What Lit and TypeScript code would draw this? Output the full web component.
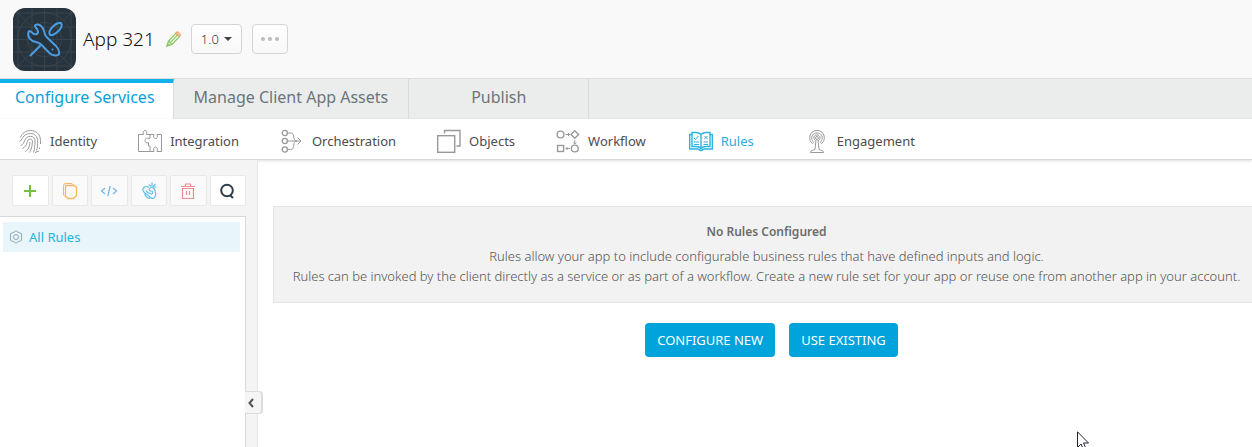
import { LitElement, html, css, svg, TemplateResult } from "lit";
import { customElement, state } from "lit/decorators.js";
import { classMap } from "lit/directives/class-map.js";

const identityIcon = html`<svg class="icon" viewBox="0 0 24 24" aria-hidden="true">
  <path d="M2.5 8.5C4 4 8 1.5 12.500 1.500C18 1.500 22.500 5.500 22.500 11.500V15" />
  <path d="M1.500 12.500C4.500 12 4 4.500 12.500 4.500C17 4.500 19.700 8 19.700 12C19.700 16 19.500 19 18.500 21.500" />
  <path d="M2.500 16.500C8 14.500 5.500 7.300 12.500 7.300C15.500 7.300 17 9.500 17 12C17 17 16.500 20 15.500 23.500" />
  <path d="M4.500 19.500C10.500 16.500 8 10 12.300 10C14 10 14.500 11.500 14.400 13C14 18 13.500 20.500 11.500 23.500" />
  <path d="M7.500 22.500C11 19.500 11.500 17 12 13" />
  <path d="M21.500 18.500V20M17 23.500L21 22" />
</svg>`;

const integrationIcon = html`<svg class="icon" viewBox="0 0 24 24" aria-hidden="true">
  <path d="M.5 5.500H5.500C4.500 2.500 5.500 1.500 7 1.500C8.500 1.500 9.500 2.500 8.500 5.500H12V9.500C8.500 8.500 7 9.500 7 11.500C7 13.500 8.500 14.500 10.500 13.500V17H12V22.500H.5Z" />
  <path d="M12 5.500H16C15 8.500 16 9.500 17.500 9.500C19 9.500 20 8.500 19 5.500H23.500V22.500H19C20 19.500 19 18 17.500 18C16 18 15 19.500 16 22.500H12" />
</svg>`;

const orchestrationIcon = html`<svg class="icon" viewBox="0 0 24 24" aria-hidden="true">
  <g stroke-width="1.300"><circle cx="4.800" cy="4" r="2.600" /><circle cx="4.800" cy="12" r="2.600" /><circle cx="4.800" cy="20.500" r="2.600" /></g>
  <path d="M7.500 4H10.500C16 4 11.500 12 17 12M7.500 20.500H10.500C16 20.500 11.500 12 17 12M7.500 12H21M17.500 8.500L21 12L17.500 15.500" />
</svg>`;

const objectsIcon = html`<svg class="icon bold" viewBox="0 0 24 24" aria-hidden="true">
  <rect x=".7" y="6.700" width="17" height="16.600" /><path d="M7.500 4.500V1.500H23V17H19.500" />
</svg>`;

const workflowIcon = html`<svg class="icon bold" viewBox="0 0 24 24" aria-hidden="true">
  <circle cx="4.500" cy="5.500" r="3.400" /><path d="M18.800 1.700L22.600 5.500L18.800 9.300L15 5.500Z" />
  <circle cx="18.800" cy="19.500" r="3.400" /><rect x="1.600" y="16.500" width="6" height="6" />
  <path class="thin" d="M9.500 5.500H13.500M12 4L13.500 5.500L12 7M18.800 11V15M17.300 13.500L18.800 15L20.300 13.500M14 19.500H10M11.500 18L10 19.500L11.500 21" />
</svg>`;

const rulesIcon = html`<svg class="icon bold" viewBox="0 0 24 24" aria-hidden="true">
  <path d="M12 5.500C10.500 4 8.500 3.500 7 3.500H3V17.500H7C9 17.500 11 18 12 19.500C13 18 15 17.500 17 17.500H21V3.500H17C15.500 3.500 13.500 4 12 5.500V19" />
  <path d="M3 5.500H.7V20H9C10 20 10.500 21.500 12 21.500C13.500 21.500 14 20 15 20H23.300V5.500H21" />
  <path class="thin" d="M5 9L6.500 10.500L9.500 7M15.500 7L18.500 10M18.500 7L15.500 10M5 13H10M5 15.500H10M14.500 13H19M14.500 15.500H19" />
</svg>`;

const engagementIcon = html`<svg class="icon" viewBox="0 0 24 24" aria-hidden="true">
  <path d="M7.500 14.500C3 12 3.500 1.500 12 1.500C20.500 1.500 21 12 16.500 14.500C14.500 13.500 16 12.500 17 10.500C18 7 16 4 12 4C8 4 6 7 7 10.500C8 12.500 9.500 13.500 7.500 14.500Z" />
  <path d="M10.500 11.500C7.500 9.500 9 6 12 6C15 6 16.500 9.500 13.500 11.500" />
  <circle cx="12" cy="9" r="1.500" />
  <path d="M11 11L10 20.500C8 21.500 5.500 21 5.500 23.500H18.500C18.500 21 16 21.500 14 20.500L13 11" />
</svg>`;

interface Service { label: string; icon: TemplateResult; }
const SERVICES: Service[] = [
  { label: "Identity", icon: identityIcon },
  { label: "Integration", icon: integrationIcon },
  { label: "Orchestration", icon: orchestrationIcon },
  { label: "Objects", icon: objectsIcon },
  { label: "Workflow", icon: workflowIcon },
  { label: "Rules", icon: rulesIcon },
  { label: "Engagement", icon: engagementIcon },
];

interface Tool { label: string; tone: string; disabled: boolean; icon: unknown; }
const TOOLS: Tool[] = [
  { label: "Add", tone: "green", disabled: false, icon: svg`<path d="M9 3V15M3 9H15" stroke-width="2"/>` },
  { label: "Copy", tone: "orange", disabled: true, icon: svg`<path d="M4.500 3.500H13L15.500 5.500V13.500L12.500 16.500H7L4.500 14Z" stroke-width="1.300"/><path d="M4 14.500L2.500 13V3.500Q2.500 1.500 4.500 1.500H11L12.500 3"/>` },
  { label: "Edit code", tone: "blue", disabled: true, icon: svg`<path d="M5 6L1.500 9L5 12M13 6L16.500 9L13 12M10.200 4L7.800 14" stroke-width="1.300"/>` },
  { label: "Link", tone: "cyan", disabled: true, icon: svg`<path d="M9 5.500C6 3 2 6 3 8.500C4 11.500 8 12.500 10.500 15.500C13 18 16.500 15 15.500 11C15 8 14.500 5 11.500 5.500C8.500 6 8.500 9 11 9C13.500 9 13 12.500 11 12C9.500 11.500 6.500 10 6 8.500M5 11C4.500 13.500 7 16 10 16.500M9 2.500L11 4.500M12 .5V4.500M15.500 2L13 4.500M14 5H16.500" stroke-width="1.200"/>` },
  { label: "Delete", tone: "red", disabled: true, icon: svg`<path d="M2 4.500H16M6.500 4.500V2H11.500V4.500M3.500 6.500V16.500H14.500V6.500Z M7.500 9V13M10.500 9V13" stroke-width="1.200"/>` },
  { label: "Search", tone: "dark", disabled: false, icon: svg`<circle cx="8" cy="8.500" r="5.800" stroke-width="2"/><path d="M11 13L14 16" stroke-width="2"/>` },
];

@customElement("app-root")
export class AppRoot extends LitElement {
  @state() private service = "Rules";

  static styles = css`
    :host {
      position: relative;
      display: flex;
      flex-direction: column;
      min-height: 100vh;
      overflow: hidden;
      background: #fff;
      color: #555;
      font: 300 13px/20px "Noto Sans", "Open Sans", sans-serif;
    }
    * { box-sizing: border-box; }
    button { font: inherit; color: inherit; padding: 0; margin: 0; cursor: pointer; }
    a { color: inherit; text-decoration: none; }
    svg { display: block; flex: none; fill: none; stroke: currentColor; }

    .header {
      display: flex;
      align-items: center;
      height: 79px;
      padding: 0 13px;
      background: #f9f9f9;
      border-bottom: 1px solid #dcdcdc;
    }
    .title { margin: 0 11px 0 7px; font-size: 19px; line-height: 26px; font-weight: 300; color: #111; }
    .plain { border: 0; background: none; }
    .chip {
      display: flex;
      align-items: center;
      justify-content: center;
      height: 30px;
      padding: 0 9px;
      border: 1px solid #d4d4d4;
      border-radius: 4px;
      background: linear-gradient(#fff, #f8f8f8);
      color: #333;
    }
    .version { gap: 5px; margin: 0 10px; }
    .caret { border: 4px solid transparent; border-top-color: #444; border-bottom: 0; }
    .dots { gap: 3px; padding: 0 8px; }
    .dot { width: 4px; height: 4px; border-radius: 50%; background: #bbb; }

    .tabs {
      display: flex;
      height: 40px;
      background: #ebeded;
      font-size: 16px;
      font-weight: 400;
      color: #6b757b;
    }
    .tab {
      display: flex;
      justify-content: center;
      padding: 7px 20px 0;
      border-right: 1px solid #dadcdc;
      line-height: 22px;
    }
    .tab:last-child { min-width: 180px; }
    .tab.current {
      padding: 3px 18px 0 15px;
      border-top: 4px solid #10b0ec;
      background: #fff;
      color: #0a9fd8;
    }

    .services {
      position: relative;
      display: flex;
      gap: 41px;
      height: 41px;
      padding: 0 18px;
      background: #fff;
      border-bottom: 1px solid #d8d8d8;
      box-shadow: 0 1px 3px #0002;
      font-weight: 400;
      color: #4c4c4c;
    }
    .service { display: flex; align-items: center; gap: 8px; padding-top: 3px; }
    .service.current { padding: 3px 10px 0 2px; color: #2caae1; }
    .icon { width: 24px; height: 24px; color: #999; stroke-width: 1; }
    .icon.bold { stroke-width: 1.4; }
    .thin { stroke-width: 1; }
    .current .icon { color: #2cb3e0; }

    .body { flex: 1; display: grid; grid-template-columns: 258px 1fr; }
    .sidebar {
      position: relative;
      display: flex;
      flex-direction: column;
      padding: 15px 11px 0 0;
      background: #f4f4f4;
      border-right: 1px solid #e6e6e6;
    }
    .tools {
      display: grid;
      grid-template-columns: repeat(6, 1fr);
      gap: 3px;
      padding-left: 12px;
      margin-bottom: 10px;
    }
    .tool {
      display: flex;
      align-items: center;
      justify-content: center;
      height: 31px;
      border: 1px solid #e9e9e9;
      border-radius: 2px;
      background: #fff;
    }
    .tool:disabled { background: #fafafa; }
    .tool svg { width: 18px; height: 18px; }
    .green { color: #76bf43; }
    .orange { color: #f6b75f; }
    .blue { color: #79b7ea; }
    .cyan { color: #66c2e6; }
    .red { color: #ee8d92; }
    .dark { color: #2f3d48; }

    .list {
      flex: 1;
      margin: 0;
      padding: 5px 5px 0 3px;
      list-style: none;
      background: #fff;
      border: 1px solid #d9d9d9;
      border-width: 1px 1px 0 0;
    }
    .entry {
      display: flex;
      align-items: center;
      gap: 6px;
      height: 30px;
      padding-left: 6px;
      background: #e8f5fb;
      color: #1fb4dc;
      font-weight: 400;
    }
    .entry svg { color: #93aab2; }
    .toggle {
      position: absolute;
      right: -6px;
      bottom: 33px;
      display: flex;
      align-items: center;
      justify-content: center;
      width: 18px;
      height: 23px;
      padding-right: 4px;
      border: 1px solid #dcdcdc;
      border-left: 0;
      border-right-width: 2px;
      border-radius: 0 4px 4px 0;
      background: #f5f5f5;
      color: #555;
    }

    .main { min-width: 0; overflow: hidden; padding: 46px 0 0 15px; }
    .content { margin-right: -8px; }
    .panel {
      padding: 15px 16px;
      border: 1px solid #e4e4e4;
      background: #f2f2f2;
      text-align: center;
    }
    .panel h2 { margin: 0 0 4px; padding-bottom: 0; font-size: 12px; line-height: 20px; font-weight: 600; color: #6c6c6c; }
    .panel p { margin: 0; }
    .panel p:last-child { padding-bottom: 1px; }
    .actions { display: flex; justify-content: center; gap: 14px; padding: 20px 0 0 10px; }
    .action {
      height: 34px;
      padding: 0 12px;
      border: 0;
      border-radius: 4px;
      background: #00a3dc;
      color: #fff;
      font-weight: 400;
    }
    .pointer { position: absolute; top: 431px; left: 1077px; }
  `;

  render() {
    return html`
      <header class="header">
        <svg width="63" height="63" viewBox="0 0 63 63" aria-hidden="true">
          <rect width="63" height="63" rx="12" fill="#27343e" stroke="none" />
          <g stroke="#3d4a53" stroke-width=".7">
            <path d="M5 3V60M19 0V63M31.500 0V63M44 0V63M58 3V60M3 5H60M0 19H63M0 31.500H63M0 44H63M3 58H60M4 4L59 59M59 4L4 59" />
            <circle cx="31.500" cy="31.500" r="27" /><circle cx="31.500" cy="31.500" r="17" /><circle cx="31.500" cy="31.500" r="9" />
          </g>
          <g stroke="#4b9ce0" stroke-width="2" stroke-linecap="round" stroke-linejoin="round">
            <path d="M15.500 24C14 29 18 33.500 23 34C27 34.500 30 38 32.500 41L37 45.500C40 48 45 48 46 46C47 43 45 40.500 43 38L34 29.500C30.500 26.500 32 22 29 19C27 16.500 23 15.500 22 17.500C21.500 19.500 25 20.500 25 23.500C25 27 21.500 27 19.500 25C18 23 16 22.500 15.500 24Z" fill="#27343e" />
            <ellipse cx="42.500" cy="21" rx="8" ry="3.600" transform="rotate(-44 42.500 21)" />
            <path d="M27 38L17.500 47.500M39.500 41.500V41.600" />
          </g>
        </svg>
        <h1 class="title">App 321</h1>
        <button class="plain" aria-label="Rename app">
          <svg width="15" height="16" viewBox="0 0 15 16">
            <path d="M.8 15.200L2.500 10L10 2L13.500 5.500L6 13.500Z M2.500 10L6 13.500M4.300 11.700L11.800 3.700M1 15L3.500 13" stroke="#86c75c" stroke-width="1.200" />
            <path d="M10 2L11.500 .8L14.500 3.800L13.500 5.500Z" stroke="#f4a66a" stroke-width="1.200" />
          </svg>
        </button>
        <button class="chip version" aria-haspopup="menu">1.0<span class="caret"></span></button>
        <button class="chip dots" aria-label="More actions">
          <span class="dot"></span><span class="dot"></span><span class="dot"></span>
        </button>
      </header>

      <nav class="tabs" aria-label="Sections">
        <a class="tab current" href="#services">Configure Services</a>
        <a class="tab" href="#assets">Manage Client App Assets</a>
        <a class="tab" href="#publish">Publish</a>
      </nav>

      <nav class="services" aria-label="Services">
        ${SERVICES.map(
          (s) => html`<a
            class=${classMap({ service: true, current: s.label === this.service })}
            href="#${s.label.toLowerCase()}"
            @click=${() => (this.service = s.label)}
            >${s.icon}<span>${s.label}</span></a
          >`
        )}
      </nav>

      <div class="body">
        <aside class="sidebar">
          <div class="tools">
            ${TOOLS.map(
              (t) => html`<button class="tool ${t.tone}" ?disabled=${t.disabled} aria-label=${t.label}>
                <svg viewBox="0 0 18 18">${t.icon}</svg>
              </button>`
            )}
          </div>
          <ul class="list">
            <li>
              <a class="entry" href="#all-rules">
                <svg width="14" height="14" viewBox="0 0 14 14" aria-hidden="true">
                  <path d="M7 .8L9 2.200L12.500 3.600V10.400L9 11.800L7 13.200L5 11.800L1.500 10.400V3.600L5 2.200Z" /><circle cx="7" cy="7" r="2.500" />
                </svg>
                All Rules
              </a>
            </li>
          </ul>
          <button class="toggle" aria-label="Collapse sidebar">
            <svg width="6" height="10" viewBox="0 0 6 10" stroke-width="2"><path d="M5 1L1.500 5L5 9" /></svg>
          </button>
        </aside>
        <main class="main">
          <div class="content">
            <section class="panel">
              <h2>No Rules Configured</h2>
              <p>Rules allow your app to include configurable business rules that have defined inputs and logic.</p>
              <p>
                Rules can be invoked by the client directly as a service or as part of a workflow. Create a new rule set
                for your app or reuse one from another app in your account.
              </p>
            </section>
            <div class="actions">
              <button class="action">CONFIGURE NEW</button>
              <button class="action">USE EXISTING</button>
            </div>
          </div>
        </main>
      </div>

      <svg class="pointer" width="13" height="20" viewBox="0 0 13 20" aria-hidden="true">
        <path d="M.5 .8V16.500L4 13L6.500 18.800L9 17.700L6.500 12H11.500Z" fill="#fff" stroke="#222233" />
      </svg>
    `;
  }
}
